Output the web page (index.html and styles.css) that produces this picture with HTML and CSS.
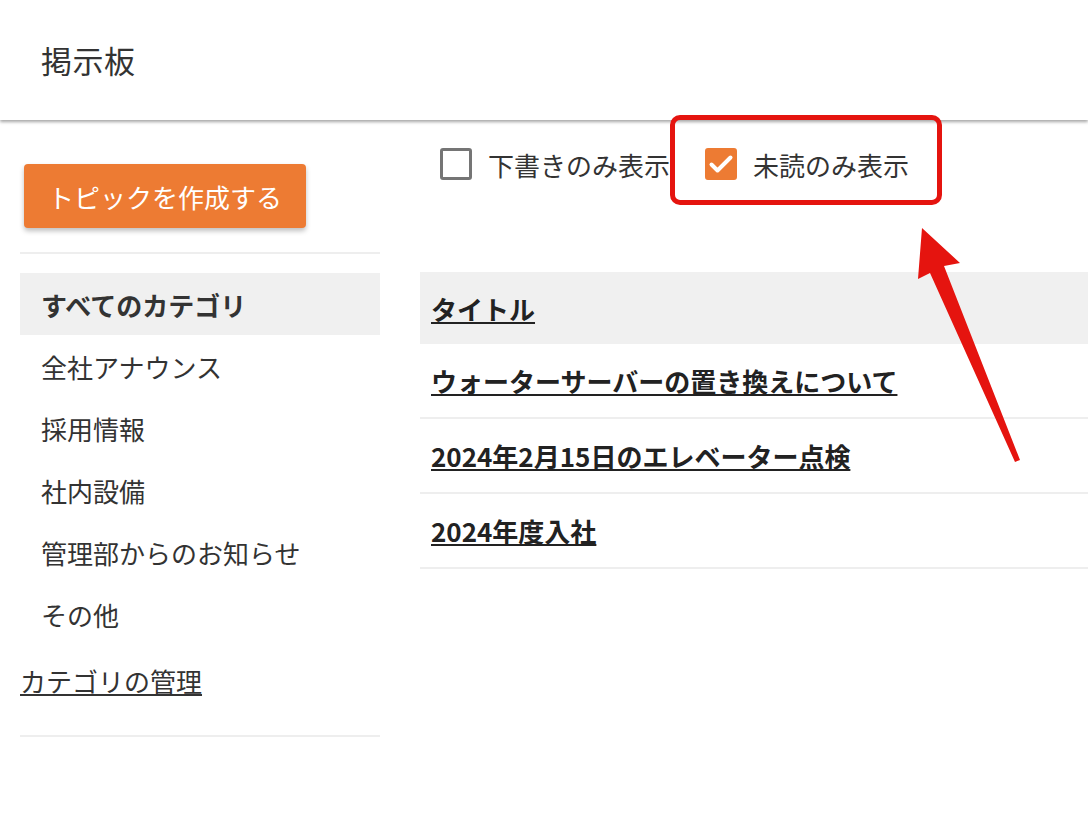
FILE: index.html
```html
<!DOCTYPE html>
<html lang="ja">
<head>
    <meta charset="UTF-8">
    <meta name="viewport" content="width=device-width, initial-scale=1.0">
    <title>掲示板</title>
    <link rel="stylesheet" href="styles.css">
</head>
<body>
    <div class="page">
        <header class="header">
            <h1>掲示板</h1>
        </header>

        <div class="content">
            <aside class="sidebar">
                <button class="btn">トピックを作成する</button>
                <hr class="divider divider-top">
                <ul class="categories">
                    <li class="selected">すべてのカテゴリ</li>
                    <li>全社アナウンス</li>
                    <li>採用情報</li>
                    <li>社内設備</li>
                    <li>管理部からのお知らせ</li>
                    <li>その他</li>
                </ul>
                <a class="manage" href="#">カテゴリの管理</a>
                <hr class="divider">
            </aside>

            <main class="main">
                <div class="filters">
                    <label class="check">
                        <span class="box"></span>
                        下書きのみ表示
                    </label>
                    <label class="check">
                        <span class="box checked">
                            <svg width="26" height="22" viewBox="0 0 26 22"><path d="M3.5 11.5l6 6L22.5 4.5" fill="none" stroke="#fff" stroke-width="4" stroke-linecap="round" stroke-linejoin="round"/></svg>
                        </span>
                        未読のみ表示
                    </label>
                </div>

                <table class="topics">
                    <thead>
                        <tr><th><a href="#">タイトル</a></th></tr>
                    </thead>
                    <tbody>
                        <tr><td><a href="#">ウォーターサーバーの置き換えについて</a></td></tr>
                        <tr><td><a href="#">2024年2月15日のエレベーター点検</a></td></tr>
                        <tr><td><a href="#">2024年度入社</a></td></tr>
                    </tbody>
                </table>
            </main>
        </div>

        <!-- annotation -->
        <div class="highlight"></div>
        <svg class="arrow" width="1088" height="824" viewBox="0 0 1088 824">
            <polygon points="922,228 960,263 944,266 1020,460 1015,462 930,273 918,279" fill="#e5140f"/>
        </svg>
    </div>
</body>
</html>
```

FILE: styles.css
```css
body {
    margin: 0;
    padding: 0;
    font-family: "Noto Sans CJK JP", "Noto Sans", sans-serif;
    color: #333;
    background-color: #fff;
}

.page {
    position: relative;
    width: 1088px;
    height: 824px;
    overflow: hidden;
}

.header {
    height: 120px;
    display: flex;
    align-items: center;
    padding-left: 41px;
    background-color: #fff;
    box-shadow: 0 2px 3px rgba(0, 0, 0, 0.35);
    position: relative;
    z-index: 1;
}

.header h1 {
    margin: 0 0 2px;
    font-size: 31px;
    font-weight: normal;
    letter-spacing: 0.5px;
    color: #333;
}

.content {
    display: flex;
    padding-left: 20px;
}

.sidebar {
    width: 360px;
    flex-shrink: 0;
}

.btn {
    margin: 44px 0 0 4px;
    height: 64px;
    padding: 0 24px;
    background-color: #ed7b33;
    color: #fff;
    border: none;
    border-radius: 4px;
    font-family: inherit;
    font-size: 26px;
    box-shadow: 0 3px 5px rgba(0, 0, 0, 0.25);
    cursor: pointer;
}

.divider {
    border: none;
    height: 2px;
    background-color: #eee;
    margin: 0;
}

.divider-top {
    margin: 24px 0 19px;
}

.categories {
    list-style: none;
    margin: 0;
    padding: 0;
}

.categories li {
    height: 62px;
    display: flex;
    align-items: center;
    padding-left: 21px;
    font-size: 26px;
}

.categories li.selected {
    background-color: #f0f0f0;
    font-weight: bold;
}

.manage {
    display: flex;
    align-items: center;
    height: 70px;
    font-size: 26px;
    color: #333;
    margin-bottom: 20px;
}

.main {
    flex: 1;
    margin-left: 40px;
}

.filters {
    display: flex;
    align-items: center;
    height: 88px;
    padding-left: 20px;
}

.check {
    display: flex;
    align-items: center;
    font-size: 26px;
    margin-right: 35px;
}

.box {
    width: 32px;
    height: 32px;
    box-sizing: border-box;
    border: 3px solid #757575;
    border-radius: 3px;
    margin-right: 16px;
    display: flex;
    align-items: center;
    justify-content: center;
}

.box.checked {
    background-color: #ed7b33;
    border-color: #ed7b33;
}

.topics {
    width: 100%;
    border-collapse: collapse;
    margin-top: 64px;
}

.topics th,
.topics td {
    text-align: left;
    padding: 0 11px;
    font-size: 26px;
    font-weight: bold;
}

.topics th {
    height: 72px;
    background-color: #f0f0f0;
}

.topics td {
    height: 73px;
    border-bottom: 2px solid #eee;
}

.topics a {
    color: #222;
}

.highlight {
    position: absolute;
    left: 670px;
    top: 115px;
    width: 272px;
    height: 90px;
    box-sizing: border-box;
    border: 5px solid #e5140f;
    border-radius: 10px;
    z-index: 2;
}

.arrow {
    position: absolute;
    left: 0;
    top: 0;
    z-index: 2;
    pointer-events: none;
}
```
